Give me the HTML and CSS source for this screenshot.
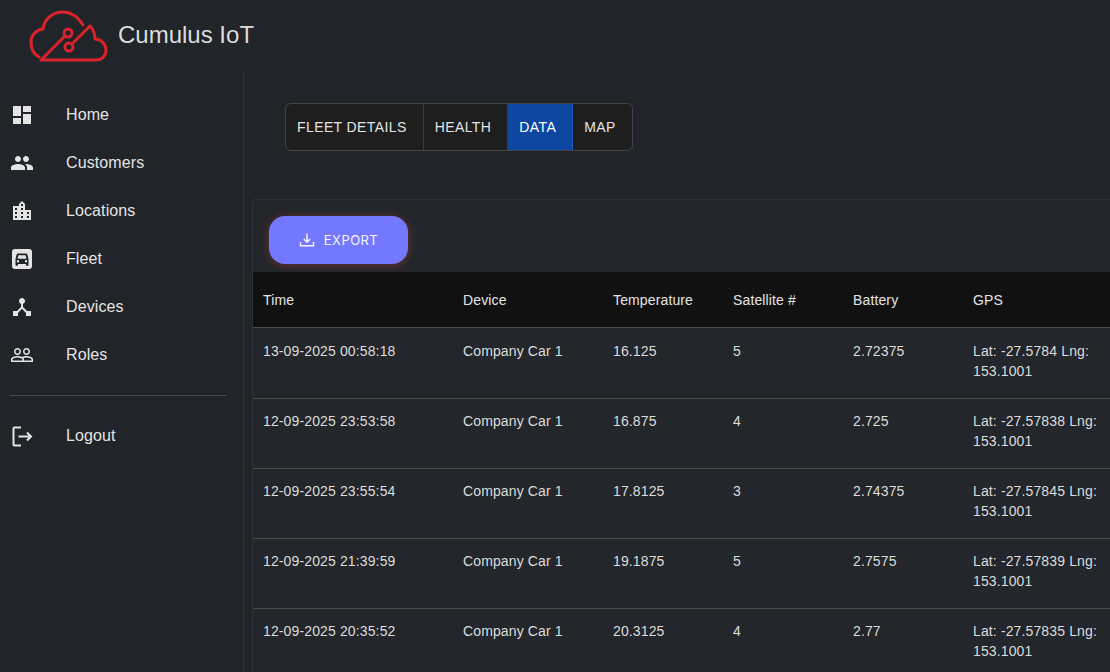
FILE: index.html
```html
<!DOCTYPE html>
<html lang="en">
<head>
  <meta charset="UTF-8">
  <meta name="viewport" content="width=device-width, initial-scale=1.0">
  <title>Cumulus IoT</title>
  <link rel="stylesheet" href="styles.css">
</head>
<body>

  <header class="topbar">
    <svg class="logo" viewBox="0 0 82 54" width="82" height="54" fill="none" stroke="#d9232b" stroke-width="3" stroke-linecap="round" stroke-linejoin="round">
      <path d="M11 47C5 44 3 39 3 32C3 25 8 20 15 19C16 9 25 2 35 2C43 2 50 7 55 15"/>
      <path d="M62 16C66 20 67 25 67 29C73 29 78 34 78 40C78 46 74 50 68 50H13L37 26"/>
      <circle cx="40" cy="23" r="4"/>
      <circle cx="41" cy="37" r="4"/>
      <path d="M44 34L62 16"/>
    </svg>
    <span class="brand">Cumulus IoT</span>
  </header>

  <div class="layout">
    <!-- Sidebar -->
    <nav class="sidebar">
      <a class="nav-item">
        <svg class="nav-icon" viewBox="0 0 24 24"><path d="M3 13h8V3H3v10zm0 8h8v-6H3v6zm10 0h8V11h-8v10zm0-18v6h8V3h-8z"/></svg>
        <span>Home</span>
      </a>
      <a class="nav-item">
        <svg class="nav-icon" viewBox="0 0 24 24"><path d="M16 11c1.66 0 2.99-1.34 2.99-3S17.66 5 16 5s-3 1.34-3 3 1.34 3 3 3zm-8 0c1.66 0 2.99-1.34 2.99-3S9.66 5 8 5 5 6.34 5 8s1.34 3 3 3zm0 2c-2.33 0-7 1.17-7 3.5V19h14v-2.5C15 14.17 10.33 13 8 13zm8 0c-.29 0-.62.02-.97.05 1.16.84 1.97 1.97 1.97 3.45V19h6v-2.5c0-2.33-4.67-3.5-7-3.5z"/></svg>
        <span>Customers</span>
      </a>
      <a class="nav-item">
        <svg class="nav-icon" viewBox="0 0 24 24"><path d="M15 11V5l-3-3-3 3v2H3v14h18V11h-6zm-8 8H5v-2h2v2zm0-4H5v-2h2v2zm0-4H5V9h2v2zm6 8h-2v-2h2v2zm0-4h-2v-2h2v2zm0-4h-2V9h2v2zm0-4h-2V5h2v2zm6 12h-2v-2h2v2zm0-4h-2v-2h2v2z"/></svg>
        <span>Locations</span>
      </a>
      <a class="nav-item">
        <svg class="nav-icon" viewBox="0 0 24 24"><path fill-rule="evenodd" d="M5 2h14a3 3 0 0 1 3 3v14a3 3 0 0 1-3 3H5a3 3 0 0 1-3-3V5a3 3 0 0 1 3-3zm3 4.5c-.7 0-1.2.4-1.4 1L5.5 12v6c0 .4.3.8.8.8h1c.4 0 .7-.4.7-.8v-1h8v1c0 .4.3.8.8.8h1c.4 0 .7-.4.7-.8v-6l-1.1-4.5c-.2-.6-.8-1-1.4-1H8zm-.4 5.2L8.4 8.3h7.2l.8 3.4H7.6zM8 15.4a1.2 1.2 0 1 1 0-2.4 1.2 1.2 0 0 1 0 2.4zm8 0a1.2 1.2 0 1 1 0-2.4 1.2 1.2 0 0 1 0 2.4z"/></svg>
        <span>Fleet</span>
      </a>
      <a class="nav-item">
        <svg class="nav-icon" viewBox="0 0 24 24"><path d="M17 16l-4-4V8.82C14.16 8.4 15 7.3 15 6c0-1.66-1.34-3-3-3S9 4.34 9 6c0 1.3.84 2.4 2 2.82V12l-4 4H3v5h5v-3.05l4-4.2 4 4.2V21h5v-5h-4z"/></svg>
        <span>Devices</span>
      </a>
      <a class="nav-item">
        <svg class="nav-icon" viewBox="0 0 24 24"><path d="M16.5 13c-1.2 0-3.07.34-4.5 1-1.43-.67-3.3-1-4.5-1C5.33 13 1 14.08 1 16.25V19h22v-2.75c0-2.17-4.33-3.25-6.5-3.25zm-4 4.5h-10v-1.25c0-.54 2.56-1.75 5-1.75s5 1.21 5 1.75v1.25zm9 0H14v-1.25c0-.46-.2-.86-.52-1.22.88-.3 1.96-.53 3.02-.53 2.44 0 5 1.21 5 1.75v1.25zM7.5 12c1.93 0 3.5-1.57 3.5-3.5S9.43 5 7.5 5 4 6.57 4 8.5 5.57 12 7.5 12zm0-5.5c1.1 0 2 .9 2 2s-.9 2-2 2-2-.9-2-2 .9-2 2-2zm9 5.5c1.93 0 3.5-1.57 3.5-3.5S18.43 5 16.5 5 13 6.57 13 8.5s1.57 3.5 3.5 3.5zm0-5.5c1.1 0 2 .9 2 2s-.9 2-2 2-2-.9-2-2 .9-2 2-2z"/></svg>
        <span>Roles</span>
      </a>
      <hr class="nav-divider">
      <a class="nav-item">
        <svg class="nav-icon logout-icon" viewBox="0 0 24 24"><path d="M11 3.5H4.5a1 1 0 0 0-1 1v16a1 1 0 0 0 1 1H11M8.5 12.5H21M17 8.5l4 4-4 4"/></svg>
        <span>Logout</span>
      </a>
    </nav>

    <main class="content">
      <div class="tabs">
        <button class="tab">Fleet Details</button>
        <button class="tab">Health</button>
        <button class="tab active">Data</button>
        <button class="tab">Map</button>
      </div>

      <section class="card">
        <div class="card-tools">
          <button class="export-btn">
            <svg class="export-icon" viewBox="0 0 16 16" fill="none" stroke="currentColor" stroke-width="1.5"><path d="M8 1.5v8.5M4.8 7L8 10.2 11.2 7M1.5 10v3.8h13V10"/></svg>
            Export
          </button>
        </div>
        <table class="data-table">
          <thead>
            <tr>
              <th class="col-time">Time</th>
              <th class="col-device">Device</th>
              <th class="col-temp">Temperature</th>
              <th class="col-sat">Satellite #</th>
              <th class="col-batt">Battery</th>
              <th>GPS</th>
            </tr>
          </thead>
          <tbody>
            <tr>
              <td>13-09-2025 00:58:18</td><td>Company Car 1</td><td>16.125</td><td>5</td><td>2.72375</td>
              <td>Lat: -27.5784 Lng:<br>153.1001</td>
            </tr>
            <tr>
              <td>12-09-2025 23:53:58</td><td>Company Car 1</td><td>16.875</td><td>4</td><td>2.725</td>
              <td>Lat: -27.57838 Lng:<br>153.1001</td>
            </tr>
            <tr>
              <td>12-09-2025 23:55:54</td><td>Company Car 1</td><td>17.8125</td><td>3</td><td>2.74375</td>
              <td>Lat: -27.57845 Lng:<br>153.1001</td>
            </tr>
            <tr>
              <td>12-09-2025 21:39:59</td><td>Company Car 1</td><td>19.1875</td><td>5</td><td>2.7575</td>
              <td>Lat: -27.57839 Lng:<br>153.1001</td>
            </tr>
            <tr>
              <td>12-09-2025 20:35:52</td><td>Company Car 1</td><td>20.3125</td><td>4</td><td>2.77</td>
              <td>Lat: -27.57835 Lng:<br>153.1001</td>
            </tr>
          </tbody>
        </table>
      </section>
    </main>
  </div>

</body>
</html>
```

FILE: styles.css
```css
/* Universal Styles */
* { box-sizing: border-box; margin: 0; padding: 0; }

html, body { height: 100%; overflow: hidden; }

body {
  font-family: 'Liberation Sans', Arial, sans-serif;
  background: #212429;
  color: #e4e4e4;
}

/* Top bar */
.topbar {
  height: 73px;
  display: flex;
  align-items: center;
  padding-left: 28px;
  gap: 8px;
}

.logo { display: block; margin-top: 1px; }

.brand { font-size: 24px; color: #dcdcdc; margin-bottom: 3px; }

.layout { display: flex; height: calc(100vh - 73px); }

/* Sidebar */
.sidebar {
  width: 244px;
  flex: none;
  padding-top: 18px;
  border-right: 1px solid #2f3237;
}

.nav-item {
  height: 48px;
  display: flex;
  align-items: center;
  padding-left: 10px;
  font-size: 16px;
  letter-spacing: 0.1px;
  color: #e4e4e4;
}

.nav-icon {
  width: 24px;
  height: 24px;
  fill: #e4e4e4;
  margin-right: 32px;
  flex: none;
}

.logout-icon { fill: none; stroke: #e4e4e4; stroke-width: 2; }

.nav-divider {
  border: none;
  border-top: 1px solid #44474c;
  margin: 16px 16px 16px 10px;
}

/* Main */
.content { flex: 1; min-width: 0; padding: 30px 0 0 8px; }

.tabs {
  display: inline-flex;
  margin-left: 33px;
  height: 48px;
  border: 1px solid #424448;
  border-radius: 6px;
  background: #1e1e1e;
  overflow: hidden;
}

.tab {
  font-family: inherit;
  font-size: 14px;
  letter-spacing: 0.4px;
  text-transform: uppercase;
  color: #e4e4e4;
  background: none;
  border: none;
  border-right: 1px solid #3a3c40;
  padding: 0 16px 0 11px;
}

.tab.active { background: #0d47a1; color: #fff; border-right-color: #1a5ab8; }
.tab:last-child { border-right: none; }

.card {
  margin-top: 48px;
  border: 1px solid #2f3237;
  border-right: none;
  border-bottom: none;
  border-radius: 4px 0 0 0;
  background: #23262b;
}

.card-tools { padding: 16px 16px 8px; }

.export-btn {
  display: flex;
  align-items: center;
  justify-content: center;
  gap: 9px;
  width: 139px;
  height: 48px;
  border: none;
  border-radius: 16px;
  background: #7478ff;
  color: #f4f4ff;
  font-family: Inter, sans-serif;
  font-size: 13px;
  letter-spacing: 0.45px;
  text-transform: uppercase;
  box-shadow: 0 1px 8px rgba(215, 70, 60, 0.4);
}

.export-icon { width: 16px; height: 16px; }

/* Table */
.data-table {
  width: 857px;
  border-collapse: collapse;
  table-layout: fixed;
  font-size: 14px;
  letter-spacing: 0.13px;
}

.data-table th {
  height: 55px;
  background: #111;
  font-weight: 400;
  text-align: left;
  padding: 2px 10px 0;
  border-bottom: 1px solid #4a4a4a;
}

.data-table td {
  height: 70px;
  padding: 12px 10px 0;
  line-height: 20px;
  color: #dcdcdc;
  vertical-align: top;
  border-bottom: 1px solid #4a4a4a;
}

.data-table tbody tr:first-child td { height: 71px; padding-top: 13px; }

.col-time { width: 200px; }
.col-device { width: 150px; }
.col-temp, .col-sat, .col-batt { width: 120px; }
```
